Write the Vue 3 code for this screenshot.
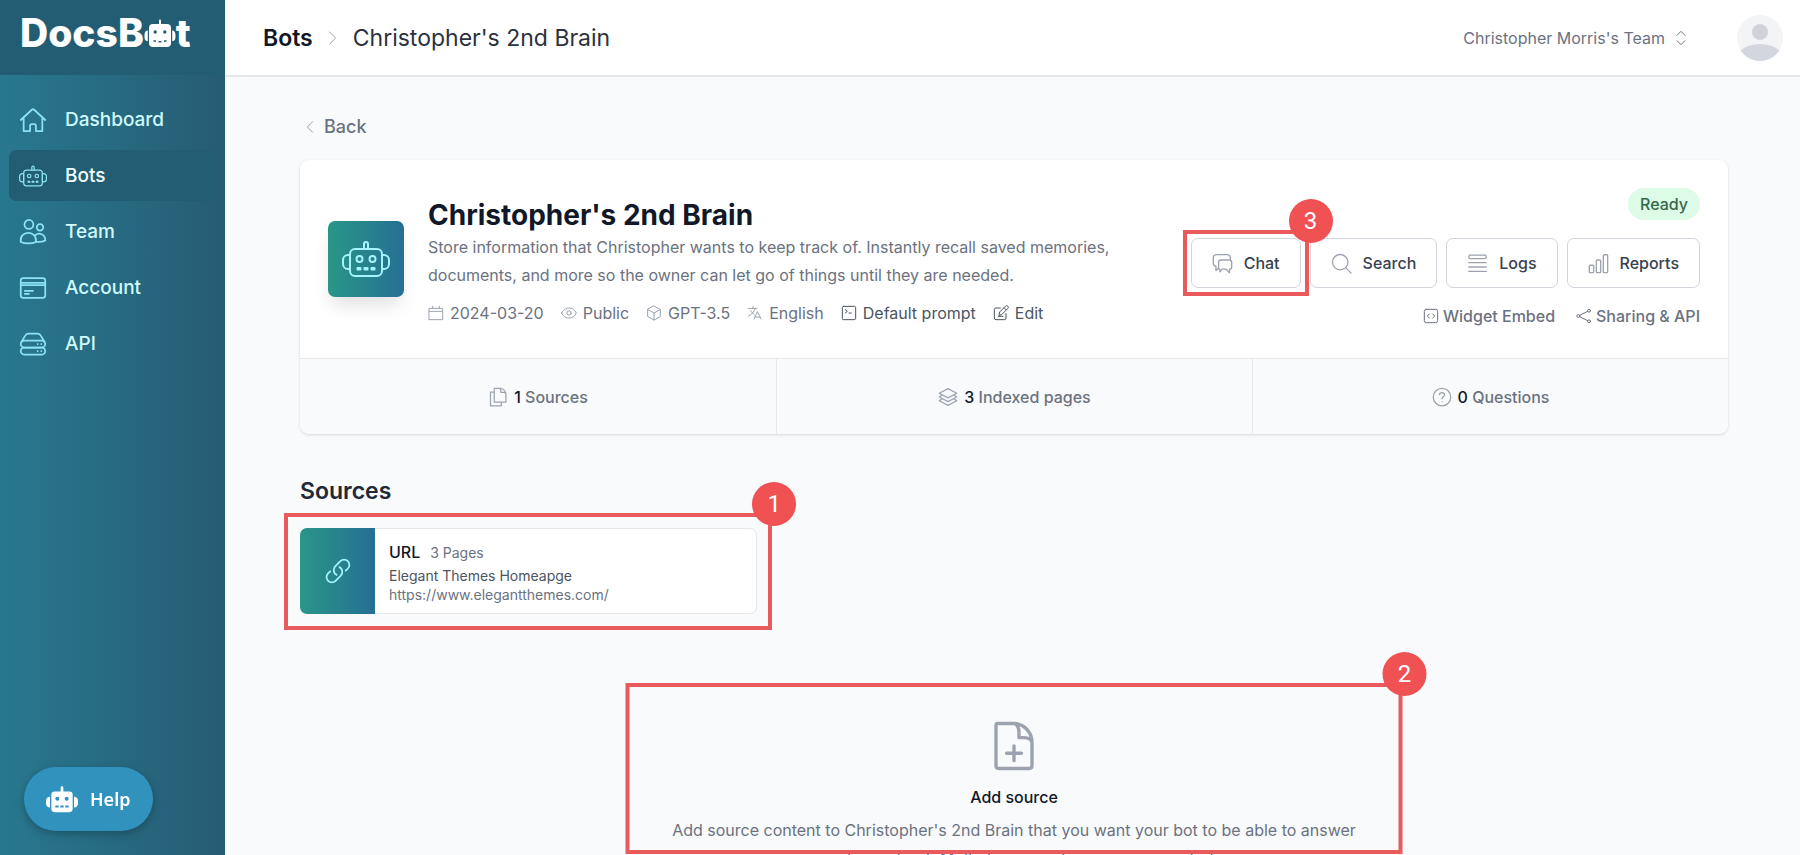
<template>
  <svg class="sprite" aria-hidden="true">
    <symbol id="robot" viewBox="0 0 48 36">
      <rect x="8" y="8" width="32" height="27" rx="5" />
      <path d="M22 8V3a2 2 0 0 1 4 0v5" />
      <path d="M8 14H6a5 5 0 0 0-5 5v4a5 5 0 0 0 5 5h2zM40 14h2a5 5 0 0 1 5 5v4a5 5 0 0 1-5 5h-2z" />
      <circle cx="17.500" cy="18" r="3" />
      <circle cx="30.500" cy="18" r="3" />
      <path d="M15.500 27h3v1.500h-3zM22.500 27h3v1.500h-3zM29.500 27h3v1.500h-3z" />
    </symbol>
    <symbol id="robot-solid" viewBox="0 0 48 40">
      <path
        fill="currentColor"
        fill-rule="evenodd"
        stroke="none"
        d="M22 8V2a2 2 0 0 1 4 0v6h9a5 5 0 0 1 5 5v21a5 5 0 0 1-5 5H13a5 5 0 0 1-5-5V13a5 5 0 0 1 5-5zM14 19a3 3 0 1 0 6 0a3 3 0 1 0-6 0zM28 19a3 3 0 1 0 6 0a3 3 0 1 0-6 0zM14 29h5v3h-5zM21.500 29h5v3h-5zM29 29h5v3h-5zM6 16v16c-4 0-6-3-6-6v-4c0-3 2-6 6-6zM42 16v16c4 0 6-3 6-6v-4c0-3-2-6-6-6z"
      />
    </symbol>
    <symbol id="robot-logo" viewBox="0 0 32 28">
      <path
        fill="currentColor"
        fill-rule="evenodd"
        stroke="none"
        d="M15 5V1.500a1 1 0 0 1 2 0V5h6a4 4 0 0 1 4 4v15a4 4 0 0 1-4 4H9a4 4 0 0 1-4-4V9a4 4 0 0 1 4-4zM9.500 13a1.700 1.700 0 1 0 3.400 0a1.700 1.700 0 1 0-3.400 0zM19.100 13a1.700 1.700 0 1 0 3.400 0a1.700 1.700 0 1 0-3.400 0zM9.500 21l2.500.5v1.500l-2.500-.5zM14.500 22h3v1.500h-3zM22.500 21l-2.500.5v1.500l2.500-.5zM3.800 11.500v10.500C1 22 .500 20 .500 17s.500-5.500 3.300-5.500zM28.200 11.500v10.500c2.800 0 3.300-2 3.300-5s-.5-5.500-3.300-5.500z"
      />
    </symbol>
    <symbol id="home" viewBox="0 0 24 24">
      <path d="M1.500 12 11 3.200a1.500 1.500 0 0 1 2 0L22.500 12M4 10v11.500h5.500V17a1.500 1.500 0 0 1 1.500-1.500h2a1.500 1.500 0 0 1 1.500 1.500v4.500H20V10" />
    </symbol>
    <symbol id="team" viewBox="0 0 24 24">
      <circle cx="8.500" cy="5.500" r="3.800" />
      <circle cx="18" cy="8" r="2.800" />
      <path d="M1.500 20.500c-.6-5 2.500-7.800 6.500-7.800s7 2.800 6.500 7.800c-3.500 1.800-9.500 1.800-13 0zM14 14.800c3-2.600 8.500-1.200 8.500 4.400-2 1.200-5 1.500-8 1.200" />
    </symbol>
    <symbol id="card" viewBox="0 0 24 24">
      <rect x="1.500" y="3.500" width="21" height="17" rx="2.200" />
      <path d="M1.500 7.500h21M1.500 9.500h21M5 14.500h7M5 17h3.500" />
    </symbol>
    <symbol id="server" viewBox="0 0 24 24">
      <rect x="1.500" y="9" width="21" height="6" rx="3" />
      <rect x="1.500" y="15" width="21" height="6" rx="3" />
      <path d="M2 10.500 5.200 5A3.500 3.500 0 0 1 8 3.200h8A3.500 3.500 0 0 1 18.800 5L22 10.500M16 12h.1M19 12h.1M16 18h.1M19 18h.1" />
    </symbol>
    <symbol id="chevron-right" viewBox="0 0 24 24"><path d="m7 3 9 9-9 9" /></symbol>
    <symbol id="chevron-left" viewBox="0 0 24 24"><path d="m16 4-8 8 8 8" /></symbol>
    <symbol id="up-down" viewBox="0 0 24 24"><path d="m6 8 6-6 6 6M6 16l6 6 6-6" /></symbol>
    <symbol id="calendar" viewBox="0 0 24 24">
      <path d="M2 5h20v17H2zM2 9.500h20M7 2v3M17 2v3" />
    </symbol>
    <symbol id="eye" viewBox="0 0 24 24">
      <path d="M1 12c2-5 6-7.500 11-7.500S21 7 23 12c-2 5-6 7.500-11 7.500S3 17 1 12z" />
      <circle cx="12" cy="12" r="3.200" />
    </symbol>
    <symbol id="cube" viewBox="0 0 24 24">
      <path d="m12 1.500 9.500 5.200v10.600L12 22.500l-9.500-5.200V6.700zM2.500 6.700 12 12l9.500-5.300M12 12v10.500" />
    </symbol>
    <symbol id="language" viewBox="0 0 24 24">
      <path d="M10.500 21 15.700 9.900 21 21m-9-3h7.500M1.500 5.600C4 5.200 6.500 5 9 5m0 0c1.100 0 2.200 0 3.300.1M9 5V2.500m3.300 2.600C11 10 7 14.500 2.500 16.500M12.300 5.100c1 .1 1.900.2 2.700.4M5.500 8.500c1.500 2.600 3.300 4.500 5.500 6.200" />
    </symbol>
    <symbol id="terminal" viewBox="0 0 24 24">
      <rect x="2" y="2" width="20" height="20" rx="2" />
      <path d="m6.500 7 3 2.500-3 2.500M12 12h3.500" />
    </symbol>
    <symbol id="edit" viewBox="0 0 24 24">
      <path d="m9 15 1-4.500 8.800-8.800a2.300 2.300 0 0 1 3.400 3.400L13.500 14zM16.500 4l3.500 3.500M19.500 13v6.500a2.500 2.500 0 0 1-2.500 2.500H4.500A2.500 2.500 0 0 1 2 19.500V7a2.500 2.500 0 0 1 2.500-2.500H11M8 17h7" />
    </symbol>
    <symbol id="chat" viewBox="0 0 24 24">
      <path d="M7.500 17.500 4.500 20v-4.600C2.600 15 1.500 13.800 1.500 12V5A3.500 3.500 0 0 1 5 1.800h12.500A3.500 3.500 0 0 1 21 5v3M9 18.500A1.500 1.500 0 0 1 7.500 17v-6.500A2.500 2.500 0 0 1 10 8h10a2.500 2.500 0 0 1 2.500 2.500V16a2.500 2.500 0 0 1-2.500 2.500v4l-4-4h-4.500l-2.500 3z" />
    </symbol>
    <symbol id="search" viewBox="0 0 24 24">
      <circle cx="10.500" cy="10.500" r="8.800" />
      <path d="m17 17 6 6" />
    </symbol>
    <symbol id="logs" viewBox="0 0 24 24">
      <rect x="2" y="2.500" width="20" height="4" rx="2" />
      <path d="M2 11h20M2 16h20M2 21h20" />
    </symbol>
    <symbol id="chart" viewBox="0 0 24 24">
      <rect x="1.500" y="14" width="5" height="8.500" rx="1.200" />
      <rect x="9.500" y="8" width="5" height="14.500" rx="1.200" />
      <rect x="17.500" y="2" width="5" height="20.500" rx="1.200" />
    </symbol>
    <symbol id="embed" viewBox="0 0 24 24">
      <rect x="2" y="2" width="20" height="20" rx="3" />
      <path d="m9.500 9-3 3 3 3M14.500 9l3 3-3 3" />
    </symbol>
    <symbol id="share" viewBox="0 0 24 24">
      <circle cx="3.500" cy="12" r="2.200" />
      <circle cx="19.500" cy="4" r="2.200" />
      <circle cx="19.500" cy="20" r="2.200" />
      <path d="m5.500 11 12-6M5.500 13l12 6" />
    </symbol>
    <symbol id="pages" viewBox="0 0 24 24">
      <path d="M7.500 6H3v16.500h13V18M7.500 1.500h8c3 1 5.500 3.500 6 6.500V18h-14zM14 1.500c2 1.500 1.500 3 1.500 5h3c1.500 0 2.500.5 3 1.500" />
    </symbol>
    <symbol id="layers" viewBox="0 0 24 24">
      <path d="m12 2 10.500 5.500L12 13 1.500 7.500zM5 9.500 1.500 12 12 17.500 22.500 12 19 9.500M5 14l-3.500 2.500L12 22l10.500-5.500L19 14" />
    </symbol>
    <symbol id="question" viewBox="0 0 24 24">
      <circle cx="12" cy="12" r="10.500" />
      <path d="M9 9.200C9 5.800 15 5.800 15 9.200c0 2.300-3 2.500-3 5M12 17.500h.1" />
    </symbol>
    <symbol id="link" viewBox="0 0 24 24">
      <path d="M13.200 8.700a4.500 4.500 0 0 1 1.200 7.200l-4.500 4.500a4.500 4.500 0 0 1-6.400-6.400l1.800-1.700m13.300-.6 1.800-1.700a4.500 4.500 0 0 0-6.400-6.400L9.600 8.100a4.500 4.500 0 0 0 1.200 7.200" />
    </symbol>
    <symbol id="file-plus" viewBox="0 0 24 24">
      <path d="M4.500 2h8.200c4.200.7 7.300 4 7.300 8.500v10.200c0 .8-.5 1.300-1.300 1.300H5.300c-.8 0-1.300-.5-1.300-1.300V3c0-.6 0-1 .5-1zM12.500 2c1.200.8 1.700 2 1.700 4v2.300h2.300c2 0 3.200.7 3.500 2.200M12 12v6.500M8.700 15.200h6.600" />
    </symbol>
  </svg>

  <div class="layout">
    <aside class="sidebar">
      <div class="brand">
        <a class="logo" href="#">
          <span>DocsB</span>
          <svg class="logo-bot" aria-hidden="true"><use href="#robot-logo" /></svg>
          <span>t</span>
        </a>
      </div>
      <nav class="nav">
        <a
          v-for="item in nav"
          :key="item.label"
          href="#"
          class="nav-item"
          :class="{ active: item.active }"
        >
          <svg class="icon" aria-hidden="true"><use :href="'#' + item.icon" /></svg>
          {{ item.label }}
        </a>
      </nav>
    </aside>

    <div class="content">
      <header class="topbar">
        <div class="crumbs">
          <a href="#" class="crumb-root">Bots</a>
          <svg class="icon" aria-hidden="true"><use href="#chevron-right" /></svg>
          <span>{{ bot.name }}</span>
        </div>
        <div class="account">
          <button class="team-switch" type="button">
            Christopher Morris's Team
            <svg class="icon" aria-hidden="true"><use href="#up-down" /></svg>
          </button>
          <button class="avatar" type="button" aria-label="Account menu">
            <svg viewBox="0 0 46 46" aria-hidden="true">
              <circle cx="23" cy="17" r="8" fill="#d0d3d9" />
              <ellipse cx="23" cy="42" rx="22" ry="13" fill="#d3d5df" />
            </svg>
          </button>
        </div>
      </header>

      <main class="main">
        <a href="#" class="back">
          <svg class="icon" aria-hidden="true"><use href="#chevron-left" /></svg>
          Back
        </a>

        <section class="bot-card">
          <div class="bot-head">
            <div class="bot-avatar">
              <svg class="icon" aria-hidden="true"><use href="#robot" /></svg>
            </div>
            <div class="bot-info">
              <h1>{{ bot.name }}</h1>
              <p>{{ bot.description }}</p>
              <div class="meta">
                <span v-for="m in meta" :key="m.label">
                  <svg class="icon" aria-hidden="true"><use :href="'#' + m.icon" /></svg>
                  {{ m.label }}
                </span>
                <a v-for="m in metaLinks" :key="m.label" href="#">
                  <svg class="icon" aria-hidden="true"><use :href="'#' + m.icon" /></svg>
                  {{ m.label }}
                </a>
              </div>
            </div>
            <div class="bot-actions">
              <span class="status">Ready</span>
              <div class="buttons">
                <div v-for="a in actions" :key="a.label" class="button-wrap">
                  <button type="button" class="btn">
                    <svg class="icon" aria-hidden="true"><use :href="'#' + a.icon" /></svg>
                    {{ a.label }}
                  </button>
                  <div v-if="a.step" class="callout callout-tight">
                    <span class="step">{{ a.step }}</span>
                  </div>
                </div>
              </div>
              <div class="links">
                <a href="#">
                  <svg class="icon" aria-hidden="true"><use href="#embed" /></svg>
                  Widget Embed
                </a>
                <a href="#">
                  <svg class="icon" aria-hidden="true"><use href="#share" /></svg>
                  Sharing &amp; API
                </a>
              </div>
            </div>
          </div>
          <div class="stats">
            <div v-for="s in stats" :key="s.label" class="stat">
              <svg class="icon" aria-hidden="true"><use :href="'#' + s.icon" /></svg>
              <span><b>{{ s.count }}</b> {{ s.label }}</span>
            </div>
          </div>
        </section>

        <h2>Sources</h2>
        <div class="sources">
          <div class="source-wrap">
            <a href="#" class="source">
              <span class="source-icon">
                <svg class="icon" aria-hidden="true"><use href="#link" /></svg>
              </span>
              <span class="source-body">
                <span class="source-title"><b>URL</b> 3 Pages</span>
                <span class="source-name">Elegant Themes Homeapge</span>
                <span>https://www.elegantthemes.com/</span>
              </span>
            </a>
            <div class="callout">
              <span class="step">1</span>
            </div>
          </div>
        </div>

        <div class="add-wrap">
          <button type="button" class="add-source">
            <svg class="icon" aria-hidden="true"><use href="#file-plus" /></svg>
            <strong>Add source</strong>
            <span>
              Add source content to {{ bot.name }} that you want your bot to be able to answer
              questions about. Multiple source types are supported.
            </span>
          </button>
          <div class="callout callout-add">
            <span class="step">2</span>
          </div>
        </div>
      </main>
    </div>

    <button type="button" class="help">
      <svg aria-hidden="true"><use href="#robot-solid" /></svg>
      Help
    </button>
  </div>
</template>

<script setup>
const bot = {
  name: "Christopher's 2nd Brain",
  description:
    'Store information that Christopher wants to keep track of. Instantly recall saved memories, documents, and more so the owner can let go of things until they are needed.'
}

const nav = [
  { label: 'Dashboard', icon: 'home' },
  { label: 'Bots', icon: 'robot', active: true },
  { label: 'Team', icon: 'team' },
  { label: 'Account', icon: 'card' },
  { label: 'API', icon: 'server' }
]

const meta = [
  { label: '2024-03-20', icon: 'calendar' },
  { label: 'Public', icon: 'eye' },
  { label: 'GPT-3.5', icon: 'cube' },
  { label: 'English', icon: 'language' }
]

const metaLinks = [
  { label: 'Default prompt', icon: 'terminal' },
  { label: 'Edit', icon: 'edit' }
]

const actions = [
  { label: 'Chat', icon: 'chat', step: 3 },
  { label: 'Search', icon: 'search' },
  { label: 'Logs', icon: 'logs' },
  { label: 'Reports', icon: 'chart' }
]

const stats = [
  { count: 1, label: 'Sources', icon: 'pages' },
  { count: 3, label: 'Indexed pages', icon: 'layers' },
  { count: 0, label: 'Questions', icon: 'question' }
]
</script>

<style>
body {
  margin: 0;
  background: #f9fafb;
}
</style>

<style scoped>
* {
  box-sizing: border-box;
}

.sprite {
  position: absolute;
  width: 0;
  height: 0;
}

.layout {
  display: flex;
  height: 100vh;
  overflow: hidden;
  font-family: Inter, "Liberation Sans", sans-serif;
  font-size: 16px;
  color: #6b7280;
}

a {
  color: inherit;
  text-decoration: none;
}

button {
  font: inherit;
  color: inherit;
  cursor: pointer;
}

.icon {
  flex: none;
  width: 16px;
  height: 16px;
  fill: none;
  stroke: currentColor;
  stroke-width: 1.5;
  stroke-linecap: round;
  stroke-linejoin: round;
}

/* sidebar */
.sidebar {
  flex: none;
  width: 225px;
  background: linear-gradient(90deg, #28788f, #265c73);
}

.brand {
  display: flex;
  height: 75px;
  padding: 9px 20px;
  background: #235d73;
}

.logo {
  display: flex;
  align-items: center;
  height: 48px;
  font-size: 39px;
  font-weight: 800;
  line-height: 48px;
  color: #fff;
}

.logo-bot {
  width: 32px;
  height: 28px;
}

.nav {
  display: flex;
  flex-direction: column;
  gap: 5px;
  padding: 19px 9px;
}

.nav-item {
  display: flex;
  align-items: center;
  gap: 18px;
  height: 51px;
  padding: 0 10px;
  border-radius: 7px;
  font-size: 19px;
  font-weight: 500;
  color: #cffafe;
}

.nav-item .icon {
  width: 28px;
  height: 28px;
  color: #8be4f4;
}

.nav-item.active {
  background: #235d73;
  color: #f0fdff;
}

.nav-item.active .icon {
  stroke-width: 2;
}

/* top bar */
.content {
  flex: 1;
  min-width: 0;
}

.topbar {
  display: flex;
  align-items: center;
  justify-content: space-between;
  height: 77px;
  padding: 0 17px 0 38px;
  background: #fff;
  border-bottom: 2px solid #e5e6e8;
}

.crumbs {
  display: flex;
  align-items: center;
  gap: 12px;
  font-size: 23px;
  color: #2b323d;
}

.crumbs .icon {
  color: #9ca3af;
}

.crumb-root {
  font-weight: 600;
  color: #111827;
}

.account {
  display: flex;
  align-items: center;
  gap: 48px;
}

.team-switch {
  display: flex;
  align-items: center;
  gap: 8px;
  padding: 0;
  border: 0;
  background: none;
}

.avatar {
  width: 46px;
  height: 46px;
  padding: 0;
  border: 0;
  border-radius: 50%;
  overflow: hidden;
  background: #f3f4f6;
}

.avatar svg {
  display: block;
}

/* page */
.main {
  padding: 36px 72px 0 75px;
}

.back {
  display: inline-flex;
  align-items: center;
  gap: 6px;
  padding-left: 2px;
  font-size: 18px;
  font-weight: 500;
  line-height: 28px;
}

.back .icon {
  color: #9ca3af;
}

.bot-card {
  margin-top: 19px;
  border-radius: 9px;
  background: #fff;
  box-shadow: 0 1px 3px rgba(0, 0, 0, 0.15);
}

.bot-head {
  display: flex;
  align-items: center;
  height: 198px;
  padding: 0 28px;
}

.bot-avatar {
  display: flex;
  flex: none;
  align-items: center;
  justify-content: center;
  width: 76px;
  height: 76px;
  border-radius: 7px;
  background: linear-gradient(90deg, #2a9688, #256f93);
  box-shadow: 0 12px 18px -4px rgba(0, 0, 0, 0.12);
}

.bot-avatar .icon {
  width: 48px;
  height: 36px;
  stroke-width: 2;
  color: #a5f3fc;
}

.bot-info {
  flex: 1;
  max-width: 720px;
  padding-top: 6px;
  margin-left: 24px;
}

h1 {
  margin: 0;
  font-size: 28px;
  font-weight: 700;
  line-height: 36px;
  color: #111827;
}

.bot-info p {
  margin: 0;
  line-height: 28px;
}

.meta {
  display: flex;
  gap: 17px;
  margin-top: 10px;
  line-height: 28px;
}

.meta span,
.meta a {
  display: flex;
  align-items: center;
  gap: 6px;
  white-space: nowrap;
}

.meta span .icon {
  color: #9ca3af;
}

.meta a {
  color: #4b5563;
}

.bot-actions {
  display: flex;
  flex-direction: column;
  align-items: flex-end;
  margin-left: auto;
}

.status {
  padding: 0 12px;
  border-radius: 16px;
  background: #dcfce7;
  font-weight: 500;
  line-height: 32px;
  color: #35694b;
}

.buttons {
  display: flex;
  gap: 9px;
  margin-top: 18px;
}

.button-wrap,
.source-wrap,
.add-wrap {
  position: relative;
}

.btn {
  display: flex;
  align-items: center;
  gap: 11px;
  height: 50px;
  padding: 0 20px;
  border: 1px solid #d1d5db;
  border-radius: 7px;
  background: #fff;
  font-weight: 500;
  color: #374151;
}

.btn .icon {
  width: 21px;
  height: 21px;
  color: #9ca3af;
}

.links {
  display: flex;
  gap: 21px;
  margin-top: 14px;
  font-weight: 500;
  line-height: 28px;
}

.links a {
  display: flex;
  align-items: center;
  gap: 4px;
}

.stats {
  display: grid;
  grid-template-columns: repeat(3, 1fr);
  border-top: 1px solid #e5e7eb;
  border-radius: 0 0 9px 9px;
  background: #f9fafb;
}

.stat {
  display: flex;
  align-items: center;
  justify-content: center;
  gap: 6px;
  height: 75px;
  font-weight: 500;
}

.stat + .stat {
  border-left: 1px solid #e5e7eb;
}

.stat .icon {
  width: 20px;
  height: 20px;
  color: #9ca3af;
}

.stat b {
  font-weight: 500;
  color: #111827;
}

h2 {
  margin: 43px 0 23px;
  font-size: 23px;
  font-weight: 600;
  line-height: 28px;
  color: #1f2937;
}

.sources {
  display: grid;
  grid-template-columns: repeat(3, 1fr);
  gap: 28px;
}

.source {
  display: flex;
  height: 86px;
}

.source-icon {
  display: flex;
  flex: none;
  align-items: center;
  justify-content: center;
  width: 75px;
  border-radius: 7px 0 0 7px;
  background: linear-gradient(90deg, #2a9688, #256f93);
  color: #a5f3fc;
}

.source-icon .icon {
  width: 28px;
  height: 28px;
}

.source-body {
  display: flex;
  flex: 1;
  flex-direction: column;
  justify-content: center;
  padding: 0 14px;
  border: 1px solid #e5e7eb;
  border-left: 0;
  border-radius: 0 7px 7px 0;
  background: #fff;
  font-size: 14px;
  line-height: 19px;
}

.source-title {
  line-height: 27px;
}

.source-title b {
  margin-right: 6px;
  font-size: 16px;
  font-weight: 500;
  color: #111827;
}

.source-name {
  color: #4b5563;
}

.add-wrap {
  display: flex;
  justify-content: center;
  margin-top: 69px;
}

.add-source {
  display: flex;
  flex-direction: column;
  align-items: center;
  width: 100%;
  max-width: 777px;
  padding: 36px 28px;
  border: 0;
  background: none;
}

.add-source .icon {
  width: 54px;
  height: 54px;
  color: #9ca3af;
}

.add-source strong {
  margin-top: 10px;
  font-weight: 500;
  line-height: 28px;
  color: #111827;
}

.add-source span {
  margin-top: 5px;
  line-height: 28px;
}

/* numbered callouts */
.callout {
  position: absolute;
  inset: -15px -15px -16px -16px;
  z-index: 1;
  border: 4px solid #e95a5c;
  pointer-events: none;
}

.callout-tight {
  inset: -8px;
}

.callout-add {
  inset: 0 auto auto 50%;
  width: 777px;
  height: 171px;
  transform: translateX(-50%);
}

.step {
  position: absolute;
  top: -35px;
  right: -28px;
  width: 44px;
  height: 44px;
  border-radius: 50%;
  background: #f05254;
  font-family: Roboto, sans-serif;
  font-size: 24px;
  line-height: 44px;
  text-align: center;
  color: #fff;
}

.help {
  position: fixed;
  bottom: 24px;
  left: 24px;
  display: flex;
  align-items: center;
  gap: 12px;
  height: 64px;
  padding: 0 22px;
  border: 0;
  border-radius: 32px;
  background: #3192bd;
  box-shadow: 0 3px 8px rgba(0, 0, 0, 0.25);
  font-family: "Noto Sans", sans-serif;
  font-size: 18px;
  font-weight: 600;
  color: #fff;
}

.help svg {
  width: 32px;
  height: 27px;
}
</style>
